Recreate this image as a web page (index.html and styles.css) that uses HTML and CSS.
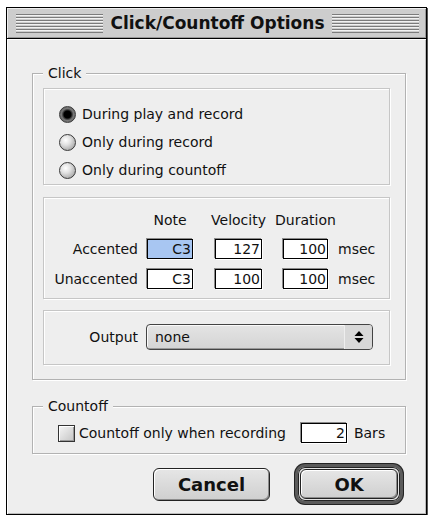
FILE: index.html
```html
<!DOCTYPE html>
<html lang="en">
<head>
    <meta charset="UTF-8">
    <title>Click/Countoff Options</title>
    <link rel="stylesheet" href="styles.css">
</head>
<body>
    <div class="window">
        <div class="titlebar">
            <span class="stripes"></span>
            <h1 class="title">Click/Countoff Options</h1>
            <span class="stripes"></span>
        </div>
        <div class="content">
            <fieldset class="group click-group">
                <legend>Click</legend>
                <div class="panel radios">
                    <label class="option"><span class="radio on"></span>During play and record</label>
                    <label class="option"><span class="radio"></span>Only during record</label>
                    <label class="option"><span class="radio"></span>Only during countoff</label>
                </div>
                <div class="panel params">
                    <div class="prow">
                        <span class="plabel"></span>
                        <span class="phead note">Note</span>
                        <span class="phead vel">Velocity</span>
                        <span class="phead dur">Duration</span>
                    </div>
                    <div class="prow">
                        <span class="plabel">Accented</span>
                        <span class="field note selected">C3</span>
                        <span class="field vel">127</span>
                        <span class="field dur">100</span>
                        <span class="unit">msec</span>
                    </div>
                    <div class="prow">
                        <span class="plabel">Unaccented</span>
                        <span class="field note">C3</span>
                        <span class="field vel">100</span>
                        <span class="field dur">100</span>
                        <span class="unit">msec</span>
                    </div>
                </div>
                <div class="panel output">
                    <span class="out-label">Output</span>
                    <div class="popup">
                        <span class="popup-text">none</span>
                        <span class="popup-arrows">
                            <svg width="10" height="14" viewBox="0 0 10 14">
                                <path d="M5 1 L9.5 6 L0.5 6 Z" fill="#000"/>
                                <path d="M0.5 8 L9.5 8 L5 13 Z" fill="#000"/>
                            </svg>
                        </span>
                    </div>
                </div>
            </fieldset>

            <fieldset class="group countoff-group">
                <legend>Countoff</legend>
                <div class="countoff-row">
                    <label class="option check-option"><span class="checkbox"></span>Countoff only when recording</label>
                    <span class="field bars">2</span>
                    <span class="unit">Bars</span>
                </div>
            </fieldset>

            <div class="buttons">
                <button class="btn cancel">Cancel</button>
                <div class="default-ring">
                    <button class="btn ok">OK</button>
                </div>
            </div>
        </div>
    </div>
</body>
</html>
```

FILE: styles.css
```css
* {
    box-sizing: border-box;
}
body {
    margin: 0;
    background-color: #fff;
    font-family: 'DejaVu Sans', Verdana, sans-serif;
    font-size: 14px;
    color: #111;
}
.window {
    width: 421px;
    margin: 7px 0 0 6px;
    border: 1px solid #000;
    box-shadow: 1px 1px 0 #555;
    background-color: #eee;
}
.titlebar {
    height: 31px;
    display: flex;
    align-items: center;
    padding: 0 7px 0 9px;
    background-color: #cdcdcd;
    border-bottom: 1px solid #000;
    box-shadow: inset 1px 1px 0 #eee, inset -1px -1px 0 #999;
}
.stripes {
    flex: 1;
    height: 19px;
    background: repeating-linear-gradient(to bottom, #7c7c7c 0 1px, #f2f2f2 1px 2px, #cdcdcd 2px 3px);
}
.title {
    margin: 0;
    padding: 0 7px;
    font-size: 17px;
    font-weight: bold;
    line-height: 20px;
    color: #111;
}
.content {
    padding: 26px 20px 10px 25px;
    box-shadow: inset 1px 1px 0 #fff, inset -1px -1px 0 #bbb;
}
.group {
    margin: 0;
    padding: 7px 15px 14px 10px;
    border: 1px solid #b2b2b2;
    box-shadow: inset 1px 1px 0 #fff, 1px 1px 0 #fff;
}
.group legend {
    padding: 0 5px;
    line-height: 16px;
    background-color: #eee;
}
.panel {
    border: 1px solid #c6c6c6;
    box-shadow: inset 1px 1px 0 #fff, 1px 1px 0 #fff;
}
.radios {
    padding: 11px 0 0 15px;
}
.option {
    display: flex;
    align-items: center;
    height: 28px;
    gap: 6px;
}
.radio {
    width: 17px;
    height: 17px;
    border-radius: 50%;
    border: 1px solid #3a3a3a;
    background: radial-gradient(circle at 38% 35%, #fff 0, #e2e2e2 35%, #a8a8a8 80%, #8a8a8a 100%);
}
.radio.on {
    background: radial-gradient(circle at 50% 50%, #000 0 3.5px, #333 4.5px, #777 6px, #555 100%);
}
.params {
    margin-top: 12px;
    padding: 13px 0 9px 0;
}
.prow {
    display: flex;
    align-items: center;
    height: 20px;
    margin-top: 10px;
}
.prow:first-child {
    height: 18px;
    margin-top: 0;
}
.plabel {
    width: 94px;
    text-align: right;
}
.phead {
    display: flex;
    justify-content: center;
    white-space: nowrap;
}
.note {
    width: 46px;
    margin-left: 9px;
}
.vel {
    width: 47px;
    margin-left: 22px;
}
.dur {
    width: 45px;
    margin-left: 21px;
}
.field {
    height: 20px;
    padding: 0 1px 0 0;
    line-height: 18px;
    text-align: right;
    background-color: #fff;
    border: 1px solid #000;
    box-shadow: -1px -1px 0 #8a8a8a, 1px 1px 0 #fff;
}
.field.selected {
    background-color: #a8c6f2;
}
.unit {
    margin-left: 10px;
}
.output {
    margin-top: 11px;
    padding: 13px 16px 14px 0;
    display: flex;
    justify-content: flex-end;
    align-items: center;
    gap: 8px;
}
.popup {
    width: 227px;
    height: 26px;
    display: flex;
    align-items: center;
    border: 1px solid #444;
    border-radius: 4px;
    background: linear-gradient(#e4e4e4, #d4d4d4);
    box-shadow: inset 1px 1px 0 #fafafa, inset -1px -1px 0 #999;
}
.popup-text {
    flex: 1;
    padding-left: 8px;
}
.popup-arrows {
    width: 28px;
    height: 100%;
    display: flex;
    align-items: center;
    justify-content: center;
    border-left: 1px solid #eee;
    background-color: #d8d8d8;
    border-radius: 0 3px 3px 0;
}
.countoff-group {
    margin-top: 18px;
    padding: 9px 15px 10px 10px;
}
.countoff-row {
    display: flex;
    align-items: center;
    height: 20px;
}
.check-option {
    height: 20px;
    margin-left: 15px;
    gap: 4px;
}
.checkbox {
    width: 17px;
    height: 17px;
    border: 1px solid #333;
    background: linear-gradient(135deg, #f6f6f6, #c4c4c4);
    box-shadow: inset 1px 1px 0 #fff, inset -1px -1px 0 #999;
}
.bars {
    width: 46px;
    margin-left: 15px;
}
.countoff-row .unit {
    margin-left: 7px;
}
.buttons {
    display: flex;
    justify-content: flex-end;
    align-items: center;
    gap: 25px;
    margin: 10px 3px 0 0;
}
.btn {
    height: 33px;
    padding: 0;
    font-family: 'DejaVu Sans', Verdana, sans-serif;
    font-size: 18px;
    font-weight: bold;
    color: #111;
    border: 1px solid #222;
    border-radius: 6px;
    background: linear-gradient(#e6e6e6, #cfcfcf);
    box-shadow: inset 1px 1px 0 #fff, inset -1px -1px 0 #8c8c8c;
}
.cancel {
    width: 117px;
}
.default-ring {
    padding: 2px;
    border: 3px solid #5a5a5a;
    border-radius: 10px;
    box-shadow: 0 0 0 1px #222, inset 0 0 0 1px #222;
    background-color: #e4e4e4;
}
.ok {
    display: block;
    width: 98px;
    height: 30px;
}
```
